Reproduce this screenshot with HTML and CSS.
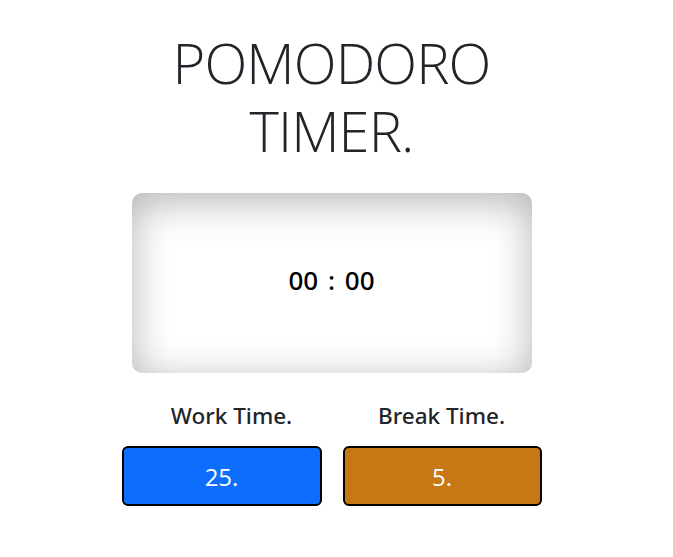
FILE: index.html
```html
<!DOCTYPE html>
<html lang="en">
<head>
<meta charset="utf-8">
<title>Pomodoro Timer</title>
<link rel="stylesheet" href="styles.css">
</head>
<body>
<main class="page">
  <h1 class="title">POMODORO<br>TIMER.</h1>
  <div class="timer"><span class="time">00 : 00</span></div>
  <div class="labels">
    <h4 class="label">Work Time.</h4>
    <h4 class="label">Break Time.</h4>
  </div>
  <div class="buttons">
    <button class="btn btn-work">25.</button>
    <button class="btn btn-break">5.</button>
  </div>
</main>
</body>
</html>
```
FILE: styles.css
```css
* { box-sizing: border-box; }
html, body { margin: 0; padding: 0; background: #fff; }
body {
  font-family: "Open Sans", "Noto Sans", "Liberation Sans", sans-serif;
  color: #212529;
}
.page {
  display: flex;
  flex-direction: column;
  align-items: center;
  padding: 29px 10px 0 0;
}
.title {
  margin: 0;
  font-size: 56px;
  font-weight: 300;
  line-height: 67.5px;
  letter-spacing: -0.9px;
  text-align: center;
  color: #212529;
}
.timer {
  margin-top: 29px;
  width: 400px;
  height: 180px;
  padding-bottom: 7px;
  border-radius: 10px;
  box-shadow: inset 0 8px 40px rgba(0, 0, 0, 0.3);
  display: flex;
  align-items: center;
  justify-content: center;
}
.time {
  font-family: "Noto Sans", "Open Sans", sans-serif;
  font-size: 26px;
  font-weight: 500;
  word-spacing: 3px;
  color: #000;
}
.labels {
  margin: 29px -10px 0 0;
  display: flex;
}
.label {
  margin: 0;
  width: 210px;
  text-align: center;
  font-family: "Noto Sans", "Open Sans", sans-serif;
  font-size: 22.5px;
  font-weight: 500;
  line-height: 27px;
}
.buttons {
  margin-top: 17px;
  width: 420px;
  display: flex;
  gap: 21px;
}
.btn {
  width: 200px;
  height: 60px;
  border: 2px solid #000;
  border-radius: 6px;
  color: #fff;
  font-family: inherit;
  font-size: 24px;
  font-weight: 400;
  padding: 0;
}
.btn-work { background: #0d6efd; }
.btn-break { background: #c77814; width: 199px; }
```
